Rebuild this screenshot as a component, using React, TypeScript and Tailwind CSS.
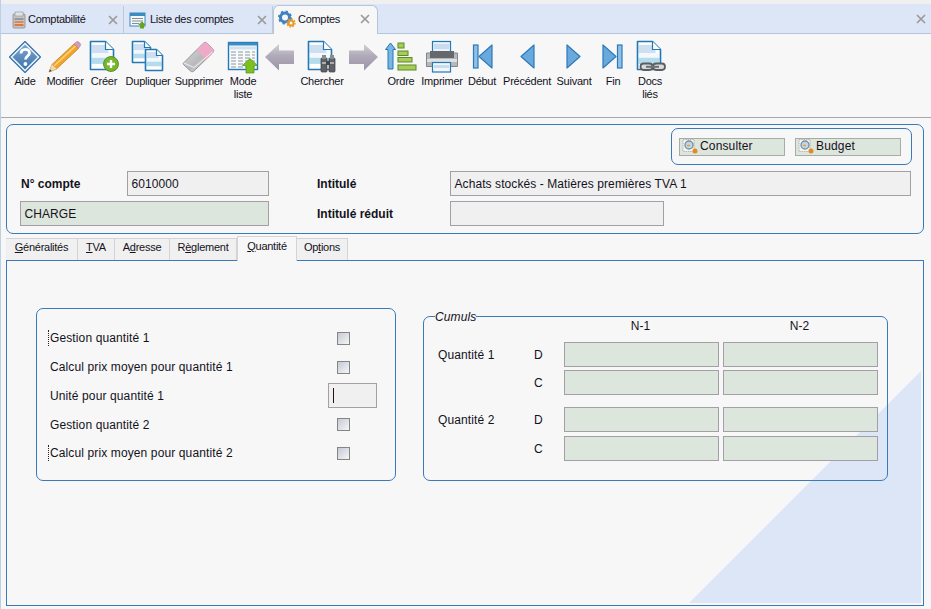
import { ReactNode } from "react";
import { X } from "lucide-react";

const FONT = "font-['Liberation_Sans',Arial,sans-serif]";

function Page({ x, y, w, h, fold = 8 }: { x: number; y: number; w: number; h: number; fold?: number }) {
  return (
    <g>
      <path d={`M${x} ${y}h${w - fold}l${fold} ${fold}v${h - fold}h${-w}z`} fill="#fff" />
      <rect x={x + 1} y={y + h * 0.12} width={w - 2 - fold / 2} height={h * 0.3} fill="#cddff1" />
      <rect x={x + 1} y={y + h * 0.42} width={w - 2} height={h * 0.16} fill="#f4f8fc" />
      <rect x={x + 1} y={y + h * 0.58} width={w - 2} height={h * 0.22} fill="#b5dcec" />
      <path d={`M${x} ${y}h${w - fold}l${fold} ${fold}v${h - fold}h${-w}z`} fill="none" stroke="#2379b5" strokeWidth="1.6" strokeLinejoin="round" />
      <path d={`M${x + w - fold} ${y}v${fold}h${fold}`} fill="#fff" stroke="#2379b5" strokeWidth="1.2" />
    </g>
  );
}

function HelpIcon() {
  return (
    <svg viewBox="0 0 36 34" className="h-[34px] w-9">
      <defs>
        <linearGradient id="helpFill" x1="0" y1="0" x2="0" y2="1">
          <stop offset="0" stopColor="#7ea6cf" />
          <stop offset="1" stopColor="#3c74ac" />
        </linearGradient>
      </defs>
      <path d="M18 1.5 33.5 17 18 32.5 2.5 17z" fill="#eef4fa" stroke="#2b6ea8" strokeWidth="1.1" strokeLinejoin="round" />
      <path d="M18 4.500 30.500 17 18 29.500 5.500 17z" fill="url(#helpFill)" />
      <path d="M14 13.500c0-5.500 8.500-5.500 8.500-.5 0 3-4 3-4 6.500" fill="none" stroke="#fff" strokeWidth="2.800" />
      <circle cx="18.400" cy="24" r="1.900" fill="#fff" />
    </svg>
  );
}

function PencilIcon() {
  return (
    <svg viewBox="0 0 36 34" className="h-[34px] w-9">
      <path d="M2 32 5 24.500 27 4 31.500 8.500 9.500 29z" fill="#f2a52c" stroke="#b87a1e" strokeWidth="0.700" strokeLinejoin="round" />
      <path d="M7.500 25.500 28.500 6" stroke="#fbd67c" strokeWidth="1.500" />
      <path d="M2 32 5 24.500 9.500 29z" fill="#edd9b6" />
      <path d="M2 32 3 29.300 4.800 31z" fill="#444" />
      <path d="M27 4 29 2.200a2.200 2.200 0 0 1 3 0l1 1a2.200 2.200 0 0 1 0 3L31.500 8.500z" fill="#d59ab4" stroke="#aa7f94" strokeWidth="0.600" />
    </svg>
  );
}

function CreateIcon() {
  return (
    <svg viewBox="0 0 36 34" className="h-[34px] w-9">
      <Page x={4.5} y={1.5} w={23} h={28} />
      <circle cx="25" cy="24" r="7.500" fill="#76b82a" stroke="#4b7d20" strokeWidth="0.800" />
      <path d="M25 20v8M21 24h8" stroke="#fff" strokeWidth="2.400" />
    </svg>
  );
}

function DuplicateIcon() {
  return (
    <svg viewBox="0 0 36 34" className="h-[34px] w-9">
      <Page x={2.5} y={1.5} w={18} h={21} fold={6} />
      <Page x={15.5} y={9.5} w={17} h={21} fold={6} />
    </svg>
  );
}

function EraserIcon() {
  return (
    <svg viewBox="0 0 36 34" className="h-[34px] w-9">
      <defs>
        <linearGradient id="eraserGrey" x1="0" y1="0" x2="1" y2="1">
          <stop offset="0" stopColor="#d9e4e4" />
          <stop offset="0.55" stopColor="#b9b9bd" />
          <stop offset="1" stopColor="#e4e4e4" />
        </linearGradient>
      </defs>
      <path d="M2.500 23 22 3.500c1.500-1.500 3-1.500 4.500 0l5 5c1.500 1.500 1.500 3 0 4.500L13 31c-1 1-2.500 1-3.500 0L3 25c-1-.8-1-1.500-.5-2z" fill="url(#eraserGrey)" stroke="#8f8f8f" strokeWidth="0.900" />
      <path d="M15.500 10 22 3.500c1.500-1.500 3-1.500 4.500 0l5 5c1.500 1.500 1.500 3 0 4.500L25 19.500z" fill="#eeaac6" />
      <path d="M3 23 13 27.500 31.500 12" fill="none" stroke="#f5f5f5" strokeWidth="0.900" />
    </svg>
  );
}

function ListModeIcon() {
  return (
    <svg viewBox="0 0 36 34" className="h-[34px] w-9">
      <rect x="3.500" y="2.500" width="29" height="27" fill="#f8fbfd" stroke="#2379b5" strokeWidth="1.400" />
      <rect x="3.500" y="2.500" width="29" height="3" fill="#3a8cc4" />
      <rect x="5" y="6.500" width="26" height="3" fill="#d3e2ef" />
      {[12, 15, 18, 21, 24, 27].map((y) => (
        <path key={y} d={`M6 ${y}h5M13 ${y}h5M20 ${y}h5M27 ${y}h3`} stroke="#8d969e" strokeWidth="1" />
      ))}
      <path d="M25 18.500 32.500 25.500h-3.500V33h-8v-7.500h-3.500z" fill="#7cc11f" stroke="#55901a" strokeWidth="0.700" />
    </svg>
  );
}

function LilacArrow({ right, id }: { right?: boolean; id: string }) {
  return (
    <svg viewBox="0 0 36 34" className={`h-[34px] w-9 ${right ? "-scale-x-100" : ""}`}>
      <defs>
        <linearGradient id={id} x1="0" y1="0" x2="0" y2="1">
          <stop offset="0" stopColor="#d2d0d6" />
          <stop offset="0.45" stopColor="#b0aab8" />
          <stop offset="1" stopColor="#9b92aa" />
        </linearGradient>
      </defs>
      <path d="M3 17 17 4v6.500h15v13.500H17v6.500z" fill={`url(#${id})`} />
    </svg>
  );
}

function SearchDocIcon() {
  return (
    <svg viewBox="0 0 36 34" className="h-[34px] w-9">
      <Page x={4.500} y={1.500} w={23} h={28} />
      <rect x="17" y="18" width="6" height="14" rx="1" fill="#5f6266" stroke="#3c3e42" strokeWidth="0.700" />
      <rect x="25" y="18" width="6" height="14" rx="1" fill="#5f6266" stroke="#3c3e42" strokeWidth="0.700" />
      <rect x="18" y="15" width="4" height="4" fill="#8a8d90" />
      <rect x="26" y="15" width="4" height="4" fill="#8a8d90" />
      <rect x="22" y="21" width="4" height="4" fill="#44474b" />
      <path d="M18 23h4M26 23h4" stroke="#c5c8cb" strokeWidth="1.500" />
    </svg>
  );
}

function OrderIcon() {
  return (
    <svg viewBox="0 0 36 34" className="h-[34px] w-9">
      <path d="M7.500 3 12.500 9.500H10V29H5V9.500H2.500z" fill="#7bb6e2" stroke="#2379b5" strokeWidth="1" strokeLinejoin="round" />
      {[
        [15, 3, 6, 5],
        [15, 11, 10, 4.500],
        [15, 17.500, 14, 4.500],
        [15, 25, 18, 5],
      ].map(([x, y, w, h]) => (
        <rect key={y} x={x} y={y} width={w} height={h} fill="#a7cc5c" stroke="#5d8a24" strokeWidth="1" />
      ))}
    </svg>
  );
}

function PrinterIcon() {
  return (
    <svg viewBox="0 0 36 34" className="h-[34px] w-9">
      <rect x="8.500" y="1.500" width="18" height="12" fill="#eaf2f9" stroke="#2379b5" strokeWidth="1.200" />
      <rect x="10" y="4" width="15" height="5" fill="#c8dcee" />
      <path d="M2.500 13h31v13.500h-31z" fill="#b5b7b9" stroke="#85888b" strokeWidth="1" />
      <rect x="6" y="11" width="24" height="7" fill="#65686c" />
      <rect x="3" y="19" width="30" height="3" fill="#dfe1e3" />
      <rect x="8.500" y="22.500" width="18" height="9.500" fill="#f2f6fa" stroke="#2379b5" strokeWidth="1.200" />
      <rect x="10" y="25" width="15" height="3" fill="#c8dcee" />
    </svg>
  );
}

function NavIcon({ dir, bar }: { dir: "left" | "right"; bar?: boolean }) {
  const tri = dir === "left" ? "M28 5v23L15 16.500z" : "M8 5v23l13-11.500z";
  const barX = dir === "left" ? 9.500 : 22.500;
  const offset = bar ? "" : dir === "left" ? "translate(-3 0)" : "translate(3 0)";
  return (
    <svg viewBox="0 0 36 34" className="h-[34px] w-9">
      <g transform={offset}>
        <path d={tri} fill="#6aa9dc" stroke="#2d7ab8" strokeWidth="1.200" strokeLinejoin="round" />
        {bar && <rect x={barX} y="5" width="4.500" height="23" fill="#8fc0e8" stroke="#2d7ab8" strokeWidth="1.200" />}
      </g>
    </svg>
  );
}

function LinkedDocIcon() {
  return (
    <svg viewBox="0 0 36 34" className="h-[34px] w-9">
      <Page x={5.500} y={1.500} w={23} h={28} />
      <rect x="8.500" y="23.500" width="12" height="6.500" rx="3.200" fill="#d8dadc" stroke="#5b5e62" strokeWidth="1.800" />
      <rect x="21" y="23.500" width="12" height="6.500" rx="3.200" fill="#d8dadc" stroke="#5b5e62" strokeWidth="1.800" />
      <path d="M14 26.800h13" stroke="#6d7074" strokeWidth="2" />
    </svg>
  );
}

function CalcTabIcon() {
  return (
    <svg viewBox="0 0 16 18" className="h-[18px] w-4 shrink-0">
      <rect x="2" y="3" width="12" height="14" rx="1" fill="#c9c5c1" stroke="#8d8b88" strokeWidth="0.800" />
      <rect x="4" y="1" width="8" height="4" fill="#e1e4e8" stroke="#8d9094" strokeWidth="0.600" />
      <rect x="3.500" y="7" width="9" height="2" fill="#8e9aa6" />
      <rect x="3.500" y="10" width="9" height="2" fill="#d98a5a" />
      <rect x="3.500" y="13" width="9" height="2" fill="#d9774a" />
    </svg>
  );
}

function ListTabIcon() {
  return (
    <svg viewBox="0 0 18 18" className="h-[18px] w-[18px] shrink-0">
      <rect x="1" y="2" width="15" height="13" fill="#f6f9fc" stroke="#3a86bd" strokeWidth="1" />
      <rect x="1" y="2" width="15" height="3" fill="#3a8cc4" />
      <path d="M3 7.500h11M3 10h11M3 12.500h7" stroke="#858c92" strokeWidth="1" />
      <path d="M13 10.500 17 14h-2v3.500h-4V14H9z" fill="#62a81e" />
    </svg>
  );
}

function GearsTabIcon() {
  return (
    <svg viewBox="0 0 18 18" className="h-[18px] w-[18px] shrink-0">
      <circle cx="7" cy="7.500" r="4.500" fill="none" stroke="#3e82c6" strokeWidth="3" />
      <circle cx="7" cy="7.500" r="6" fill="none" stroke="#3e82c6" strokeWidth="2" strokeDasharray="2.200 2.500" />
      <circle cx="13" cy="13" r="2.500" fill="none" stroke="#e79a22" strokeWidth="2" />
      <circle cx="13" cy="13" r="4" fill="none" stroke="#e79a22" strokeWidth="1.400" strokeDasharray="1.600 1.500" />
    </svg>
  );
}

function LensIcon() {
  return (
    <svg viewBox="0 0 16 16" className="h-4 w-4 shrink-0">
      <rect x="1" y="1.500" width="11" height="12" fill="#f4f4f4" stroke="#a7a7a7" strokeWidth="0.800" strokeDasharray="1.500 0.800" />
      <circle cx="7" cy="7" r="4" fill="#bcd8ee" stroke="#7f8c96" strokeWidth="1.300" />
      <path d="M5 7.500h3" stroke="#e3a13c" strokeWidth="1.500" />
      <circle cx="13" cy="13" r="2.500" fill="#e58a1f" />
    </svg>
  );
}

type Tool = { label: ReactNode; width: string; icon: ReactNode };

const tools: Tool[] = [
  { label: "Aide", width: "w-[40px]", icon: <HelpIcon /> },
  { label: "Modifier", width: "w-[40px]", icon: <PencilIcon /> },
  { label: "Créer", width: "w-[38px]", icon: <CreateIcon /> },
  { label: "Dupliquer", width: "w-[50px]", icon: <DuplicateIcon /> },
  { label: "Supprimer", width: "w-[52px]", icon: <EraserIcon /> },
  { label: <>Mode<br />liste</>, width: "w-[36px]", icon: <ListModeIcon /> },
  { label: "", width: "w-[38px]", icon: <LilacArrow id="arrowBack" /> },
  { label: "Chercher", width: "w-[46px]", icon: <SearchDocIcon /> },
  { label: "", width: "w-[36px]", icon: <LilacArrow id="arrowNext" right /> },
  { label: "Ordre", width: "w-[40px]", icon: <OrderIcon /> },
  { label: "Imprimer", width: "w-[42px]", icon: <PrinterIcon /> },
  { label: "Début", width: "w-[38px]", icon: <NavIcon dir="left" bar /> },
  { label: "Précédent", width: "w-[52px]", icon: <NavIcon dir="left" /> },
  { label: "Suivant", width: "w-[42px]", icon: <NavIcon dir="right" /> },
  { label: "Fin", width: "w-[36px]", icon: <NavIcon dir="right" bar /> },
  { label: <>Docs<br />liés</>, width: "w-[38px]", icon: <LinkedDocIcon /> },
];

function CloseX({ className = "" }: { className?: string }) {
  return <X size={14} strokeWidth={3} className={`shrink-0 text-[#9b9b9b] ${className}`} />;
}

function Field({ value, green, className = "" }: { value?: string; green?: boolean; className?: string }) {
  return (
    <div
      className={`flex h-[25px] items-center border-[1.5px] border-[#a49ea7] px-[3.5px] text-[12px] tracking-[0.08px] text-[#14121c] ${
        green ? "bg-[#dde6dd]" : "bg-[#f0f0f0]"
      } ${className}`}
    >
      {value}
    </div>
  );
}

function Check() {
  return (
    <span className="ml-[9px] block h-[13px] w-[13px] border border-[#858585] bg-gradient-to-br from-[#c6cad6] to-[#f6f6f6]" />
  );
}

const quantityRows = [
  { label: "Gestion quantité 1", dotted: true },
  { label: "Calcul prix moyen pour quantité 1" },
  { label: "Unité pour quantité 1", input: true },
  { label: "Gestion quantité 2" },
  { label: "Calcul prix moyen pour quantité 2", dotted: true },
];

const subTabs = [
  { key: "gen", w: "w-[72px]", label: <><u>G</u>énéralités</> },
  { key: "tva", w: "w-[37px]", label: <><u>T</u>VA</> },
  { key: "adr", w: "w-[55px]", label: <>A<u>d</u>resse</> },
  { key: "reg", w: "w-[67px]", label: <>R<u>è</u>glement</> },
  { key: "qte", w: "w-[60px]", label: <><u>Q</u>uantité</>, active: true },
  { key: "opt", w: "w-[51px]", label: <>Op<u>t</u>ions</> },
];

const cumulRows = [
  { name: "Quantité 1", rows: ["D", "C"], gap: "mb-[12px]", rowGap: "gap-y-[3px]" },
  { name: "Quantité 2", rows: ["D", "C"], gap: "", rowGap: "gap-y-[4px]" },
];

export default function App() {
  return (
    <div className={`flex h-screen w-full flex-col overflow-hidden border-l border-[#bcd0e4] bg-[#f7f7f7] ${FONT}`}>
      <div className="h-[4px] shrink-0 bg-[#f0f0f0]" />

      {/* onglets */}
      <div className="flex h-[30px] shrink-0 items-end border-b border-[#b4c6dc] bg-[#dde6f6] pl-[2px] pr-[3px] text-[11px] tracking-[-0.3px] text-[#14121c]">
        <div className="flex h-[27px] w-[121px] items-center border-r border-[#bfc8d8] pl-[8px] pr-[3px]">
          <CalcTabIcon />
          <span className="ml-[1px]">Comptabilité</span>
          <CloseX className="ml-auto" />
        </div>
        <div className="flex h-[27px] w-[149px] items-center border-r border-[#bfc8d8] pl-[5px] pr-[3px]">
          <ListTabIcon />
          <span className="ml-[3px]">Liste des comptes</span>
          <CloseX className="ml-auto" />
        </div>
        <div className="-mb-px flex h-[29px] w-[105px] items-center rounded-t-[6px] border border-b-0 border-[#b4c6dc] bg-[#f7f7f7] pb-[2px] pl-[4px] pr-[5px]">
          <GearsTabIcon />
          <span className="ml-[2px]">Comptes</span>
          <CloseX className="ml-auto" />
        </div>
        <CloseX className="mb-[7px] ml-auto" />
      </div>

      {/* barre d'outils */}
      <div className="flex h-[84px] shrink-0 items-start border-b border-[#aaa5ae] pl-[4px] pt-[6px] text-[11px] leading-[13px] tracking-[-0.25px] text-[#14121c]">
        {tools.map((tool, i) => (
          <div key={i} className={`flex shrink-0 flex-col items-center text-center ${tool.width}`}>
            {tool.icon}
            <span className="mt-[1px] whitespace-nowrap">{tool.label}</span>
          </div>
        ))}
      </div>

      {/* en-tete du compte */}
      <div className="ml-[5px] mr-[7px] mt-[6px] h-[110px] shrink-0 rounded-[7px] border border-[#3a7ab8] pl-[13px] pt-[3px] text-[12px] text-[#14121c]">
        <div className="mr-[11px] flex justify-end">
          <div className="flex h-[37px] w-[241px] items-center gap-[10px] rounded-[7px] border border-[#3a7ab8] pl-[7px]">
            {["Consulter", "Budget"].map((b) => (
              <div key={b} className="flex h-[18px] w-[106px] items-center gap-[2px] border border-[#a6ada6] bg-[#dde6dd] pl-[2px] pb-[1px] tracking-[0.15px]">
                <LensIcon />
                {b}
              </div>
            ))}
          </div>
        </div>
        <div className="mt-[6px] grid grid-cols-[249px_181px_461px] gap-y-[5px]">
          <div className="flex items-center justify-between pl-[1px]">
            <b>N° compte</b>
            <Field value="6010000" className="w-[142px]" />
          </div>
          <b className="ml-[48px] self-center">Intitulé</b>
          <Field value="Achats stockés - Matières premières TVA 1" />
          <Field value="CHARGE" green />
          <b className="ml-[48px] self-center">Intitulé réduit</b>
          <Field className="w-[214px]" />
        </div>
      </div>

      {/* onglets du compte */}
      <div className="ml-[5px] mt-[2px] flex h-[24px] shrink-0 items-end text-[11px] tracking-[-0.25px] text-[#14121c]">
        {subTabs.map((tab) => (
          <div
            key={tab.key}
            className={`flex items-center justify-center border-r border-t border-[#d6d2d9] ${tab.w} ${
              tab.active
                ? "relative z-10 -mb-px h-[25px] border-l bg-[#f7f7f7] pb-[6px]"
                : "h-[22px] bg-[#f0f0f0] pb-[4px]"
            }`}
          >
            {tab.label}
          </div>
        ))}
      </div>

      {/* page Quantite */}
      <div className="relative ml-[5px] mr-[7px] h-[346px] shrink-0 border border-[#3a7ab8] pl-[29px] pt-[47px] text-[12px] tracking-[0.12px] text-[#14121c]">
        <svg className="absolute bottom-[2px] right-[2px] h-[232px] w-[232px]" viewBox="0 0 232 232">
          <path d="M232 0v232H0z" fill="#dde6f6" />
        </svg>

        <div className="relative flex items-start">
          <div className="h-[173px] w-[360px] rounded-[7px] border border-[#3a7ab8] bg-[#f7f7f7] pl-[11px] pt-[15px]">
            {quantityRows.map((row) => (
              <div key={row.label} className="grid h-[28.75px] grid-cols-[280px_49px] items-center">
                <span className={`border-l pl-[1px] leading-[16px] ${row.dotted ? "border-dotted border-[#222]" : "border-transparent"}`}>
                  {row.label}
                </span>
                {row.input ? (
                  <div className="flex h-[25px] items-center border-[1.5px] border-[#a49ea7] bg-[#f0f0f0] pl-[4px]">
                    <span className="h-[15px] w-px bg-[#221018]" />
                  </div>
                ) : (
                  <Check />
                )}
              </div>
            ))}
          </div>

          <div className="relative ml-[27px] mt-[8px] h-[165px] w-[465px] rounded-[7px] border border-[#3a7ab8] pl-[14px]">
            <span className="absolute -top-[7px] left-[11px] bg-[#f7f7f7] italic leading-[14px]">Cumuls</span>
            <div className="grid h-[25px] grid-cols-[126px_155px_155px] gap-x-[4px]">
              <span />
              <span className="pr-[10px] text-center">N-1</span>
              <span className="pr-[10px] text-center">N-2</span>
            </div>
            {cumulRows.map((group) => (
              <div key={group.name} className={`grid grid-cols-[96px_30px_155px_159px] ${group.rowGap} ${group.gap}`}>
                {group.rows.map((r, i) => (
                  <div key={r} className="contents">
                    <span className="self-center">{i === 0 ? group.name : ""}</span>
                    <span className="self-center">{r}</span>
                    <Field green />
                    <Field green className="ml-[4px]" />
                  </div>
                ))}
              </div>
            ))}
          </div>
        </div>
      </div>
    </div>
  );
}
